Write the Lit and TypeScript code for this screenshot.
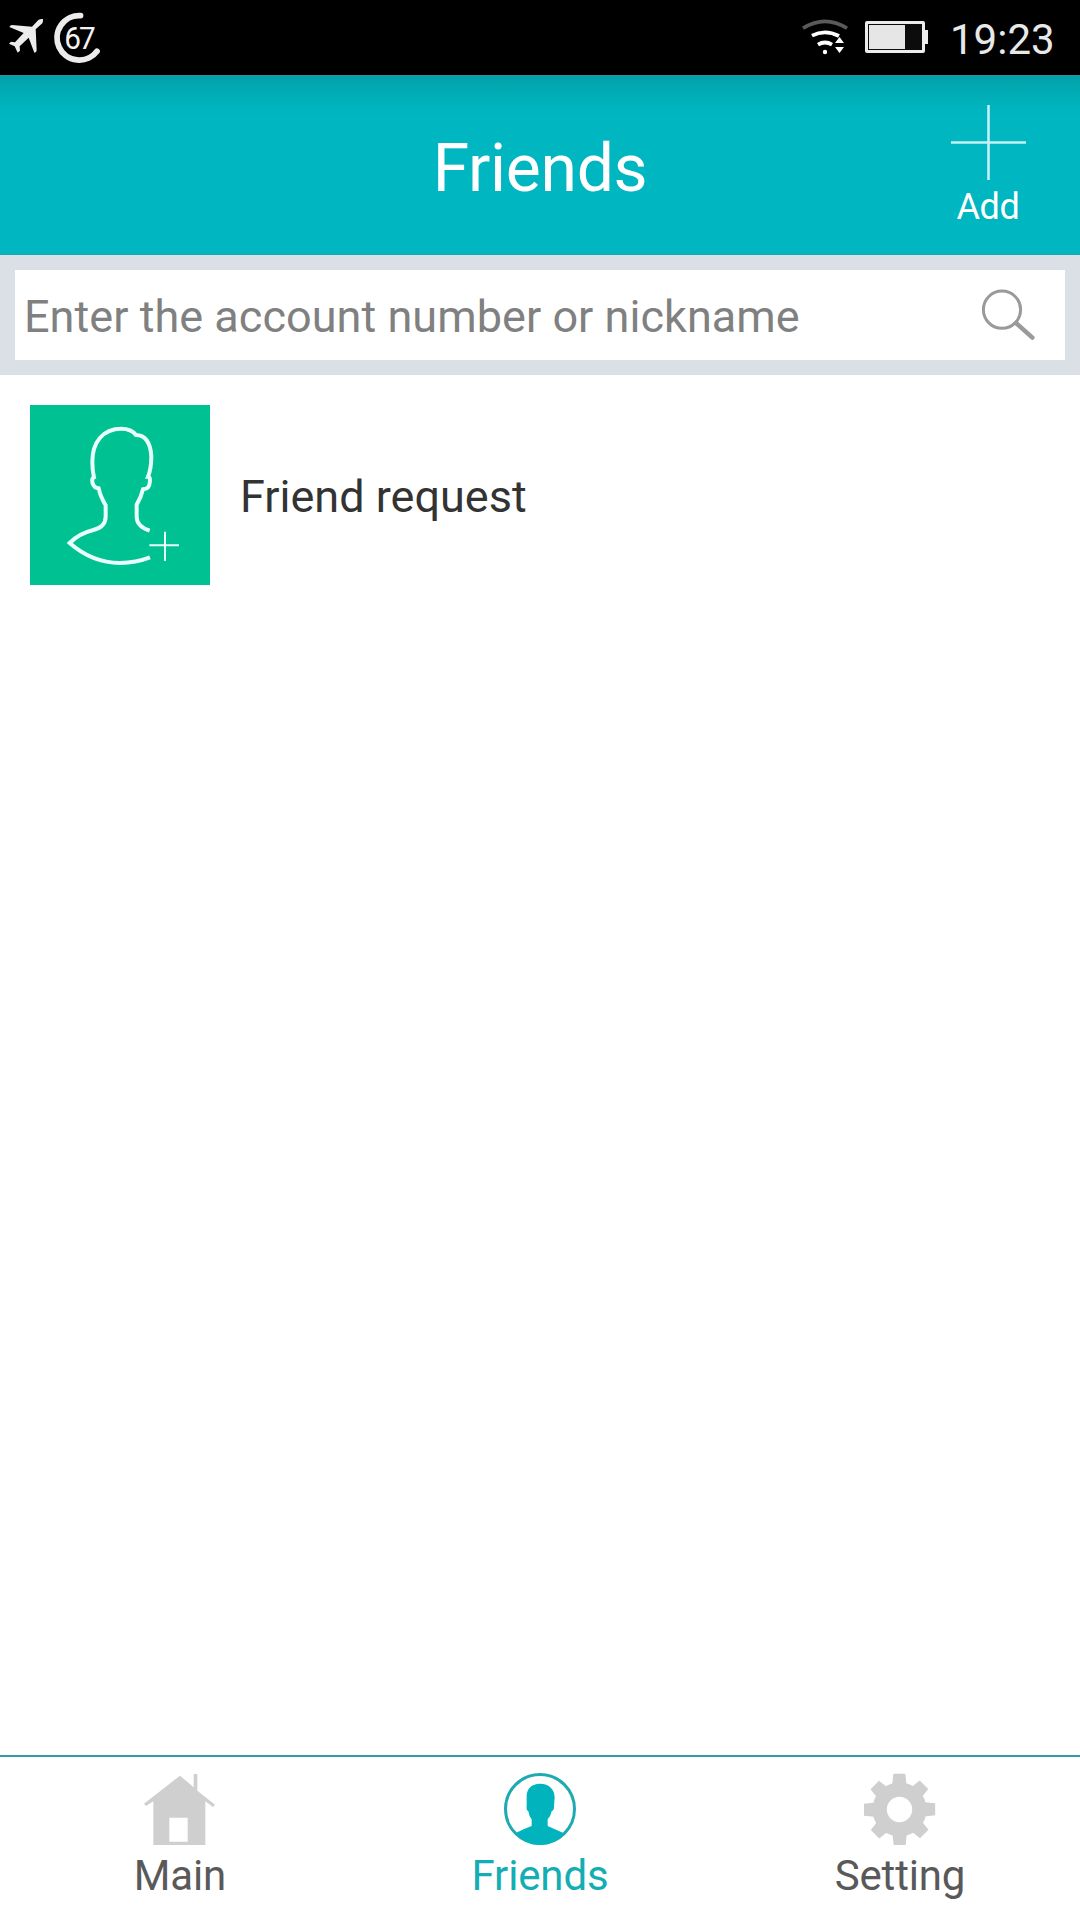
import { LitElement, html, css, svg } from "lit";
import { customElement, property, state } from "lit/decorators.js";
import { classMap } from "lit/directives/class-map.js";

const FONT = css`Roboto, "Liberation Sans", sans-serif`;

@customElement("status-bar")
class StatusBar extends LitElement {
  static styles = css`
    :host {
      display: flex;
      align-items: flex-start;
      height: 75px;
      background: #000;
      color: #e8e8e8;
      font-family: ${FONT};
    }
    .left {
      width: 120px;
      height: 75px;
    }
    .count {
      font-family: ${FONT};
      font-size: 31px;
      letter-spacing: -2px;
      fill: #f2f2f2;
    }
    .right {
      width: 160px;
      height: 75px;
      margin-left: auto;
    }
    .clock {
      width: 130px;
      padding-left: 1px;
      line-height: 79px;
      font-size: 42px;
    }
  `;
  render() {
    return html`
      <svg class="left" viewBox="0 0 120 75">
        <path
          transform="scale(.33333)"
          fill="#ececec"
          d="M115 60L96 80L36 75Q31 75 28 81L71 99L45 127L33 125L27 131L44 139L53 158L60 152L59 139L86 113L103 158Q110 158 110 151L107 88L127 70Q130 65 129 57Q121 56 115 60Z"
        />
        <path d="M80.5 15.7A22.2 22.2 0 1 0 97 51.2" fill="none" stroke="#ececec" stroke-width="5.8" stroke-linecap="round" />
        <text class="count" transform="translate(64.3 49) scale(.96 1)">67</text>
      </svg>
      <svg class="right" viewBox="789 0 160 75">
        <g fill="none">
          <path d="M803 28.3Q825 14.5 847 28.3" stroke="#5a5a5a" stroke-width="3.6" />
          <path d="M812 35.6Q825 28.8 839 36" stroke="#fff" stroke-width="3.8" />
          <path d="M818 44.6Q825 40.4 832 44.6" stroke="#fff" stroke-width="3.8" />
        </g>
        <circle cx="825" cy="52" r="2.2" fill="#fff" />
        <path d="M835 43L839.5 37L844 43ZM835 47L844 47L839.5 53Z" fill="#fff" />
        <rect x="866.5" y="22.5" width="57" height="29" rx=".5" fill="#0c0c0c" stroke="#ececec" stroke-width="3" />
        <rect x="869" y="25" width="36" height="24" fill="#e6e6e6" />
        <rect x="925" y="30" width="3" height="14" fill="#ececec" />
      </svg>
      <div class="clock">19:23</div>
    `;
  }
}

@customElement("title-bar")
class TitleBar extends LitElement {
  @property() heading = "";
  static styles = css`
    :host {
      display: grid;
      grid-template-columns: 184px 1fr 184px;
      height: 180px;
      box-sizing: border-box;
      border-top: 1px solid #2a9298;
      border-bottom: 1px solid #1ca6b0;
      background: linear-gradient(#03a1a9, #00acb5 16px, #00b4be 32px, #00b6c0 42px);
      color: #fff;
      font-family: ${FONT};
    }
    .title {
      grid-column: 2;
      line-height: 185px;
      height: 178px;
      font-size: 66px;
      letter-spacing: -0.3px;
      text-align: center;
    }
    .add {
      display: flex;
      flex-direction: column;
      align-items: center;
      padding-top: 29px;
    }
    .plus {
      width: 75px;
      height: 75px;
    }
    .label {
      margin-top: 6px;
      line-height: 42px;
      font-size: 36px;
      letter-spacing: -0.3px;
    }
  `;
  render() {
    return html`
      <div class="title">${this.heading}</div>
      <div class="add">
        <svg class="plus" viewBox="0 0 75 75">
          <path d="M0 37.5H75M37.5 0V75" stroke="#c4f1f3" stroke-width="2.6" />
        </svg>
        <div class="label">Add</div>
      </div>
    `;
  }
}

@customElement("search-box")
class SearchBox extends LitElement {
  static styles = css`
    :host {
      display: block;
      padding: 15px;
      background: #dae0e5;
      font-family: ${FONT};
    }
    .field {
      display: flex;
      justify-content: space-between;
      height: 90px;
      padding: 0 28px 0 9px;
      background: #fff;
    }
    .hint {
      line-height: 93px;
      font-size: 45px;
      letter-spacing: 0.04px;
      color: #808080;
      white-space: nowrap;
    }
    .glass {
      width: 57px;
      height: 90px;
    }
  `;
  render() {
    return html`
      <div class="field">
        <div class="hint">Enter the account number or nickname</div>
        <svg class="glass" viewBox="980 270 57 90" fill="none" stroke="#9a9a9a">
          <circle cx="1002" cy="309.7" r="18.6" stroke-width="3" />
          <path d="M1016 323L1032.4 337.6" stroke-width="4.4" stroke-linecap="round" />
        </svg>
      </div>
    `;
  }
}

@customElement("request-row")
class RequestRow extends LitElement {
  static styles = css`
    :host {
      display: flex;
      gap: 30px;
      padding: 30px;
      font-family: ${FONT};
    }
    .tile {
      width: 180px;
      height: 180px;
      background: #00c191;
    }
    .name {
      line-height: 183px;
      height: 180px;
      font-size: 45px;
      color: #333;
    }
  `;
  render() {
    return html`
      <svg class="tile" viewBox="30 45 540 540" fill="none" stroke="#e8fffc">
        <path
          stroke-width="12"
          d="M389 422Q350 409 350 380V344Q363 323 369 298Q388 297 389 279Q392 260 384 260Q394 236 394 199Q390 136 348 135Q334 116 304 116C248 116 217 157 217 215Q217 240 222 262Q214 266 218 280Q222 293 236 295Q241 319 257 346V378Q258 411 220 420Q176 431 149 459Q216 518 300 519Q348 518 390 502"
        />
        <path stroke-width="6" d="M388 466H477M435 425V513" />
      </svg>
      <div class="name">Friend request</div>
    `;
  }
}

const gearTeeth = [0, 45, 90, 135, 180, 225, 270, 315].map(
  (a) => svg`<path transform="rotate(${a} 268.5 208.5)" d="M250 ${a % 90 ? 104 : 101.5}H286L290 140H246Z" />`
);

const TABS = [
  {
    label: "Main",
    icon: svg`<svg class="icon" viewBox="132 99 216 216" fill="#cfcfcf">
      <path fill-rule="evenodd" d="M240 107L281 142V102H292V152L345 194L339 201L316 184V315H160V184L138 198L132 191ZM208 233V305H263V233Z" />
    </svg>`,
  },
  {
    label: "Friends",
    icon: svg`<svg class="icon" viewBox="162 99 216 216" fill="#00b3bd">
      <circle cx="270" cy="207" r="103.5" fill="none" stroke="#1eaab1" stroke-width="9" />
      <path d="M270 131C298 131 314 149 314 172L312 199Q313 211 305 214Q302 229 293 238V258Q315 268 342 280Q313 315 270 315Q227 315 199 278Q220 267 245 258V238Q237 229 235 214Q228 210 230 199V168C230 147 245 131 270 131Z" />
    </svg>`,
  },
  {
    label: "Setting",
    icon: svg`<svg class="icon" viewBox="162 99 216 216" fill="#cfcfcf">
      ${gearTeeth}
      <circle cx="268.5" cy="208.5" r="59.5" fill="none" stroke="#cfcfcf" stroke-width="43" />
    </svg>`,
  },
];

@customElement("tab-bar")
class TabBar extends LitElement {
  @state() active = "Friends";
  static styles = css`
    :host {
      display: grid;
      grid-template-columns: repeat(3, 1fr);
      height: 165px;
      box-sizing: border-box;
      border-top: 2px solid #2f9ea2;
      background: #fff;
      font-family: ${FONT};
    }
    .tab {
      display: flex;
      flex-direction: column;
      align-items: center;
      padding-top: 16px;
      color: #595959;
    }
    .on {
      color: #14adb4;
    }
    .icon {
      width: 72px;
      height: 72px;
    }
    .label {
      margin-top: 6px;
      line-height: 49px;
      font-size: 42px;
      letter-spacing: -0.15px;
    }
  `;
  render() {
    return TABS.map(
      (t) => html`
        <div class=${classMap({ tab: true, on: t.label === this.active })} @click=${() => (this.active = t.label)}>
          ${t.icon}
          <div class="label">${t.label}</div>
        </div>
      `
    );
  }
}

@customElement("app-root")
class AppRoot extends LitElement {
  static styles = css`
    :host {
      display: flex;
      flex-direction: column;
      width: 1080px;
      height: 1920px;
      overflow: hidden;
      background: #fff;
    }
    .list {
      flex: 1;
    }
  `;
  render() {
    return html`
      <status-bar></status-bar>
      <title-bar heading="Friends"></title-bar>
      <search-box></search-box>
      <div class="list"><request-row></request-row></div>
      <tab-bar></tab-bar>
    `;
  }
}
